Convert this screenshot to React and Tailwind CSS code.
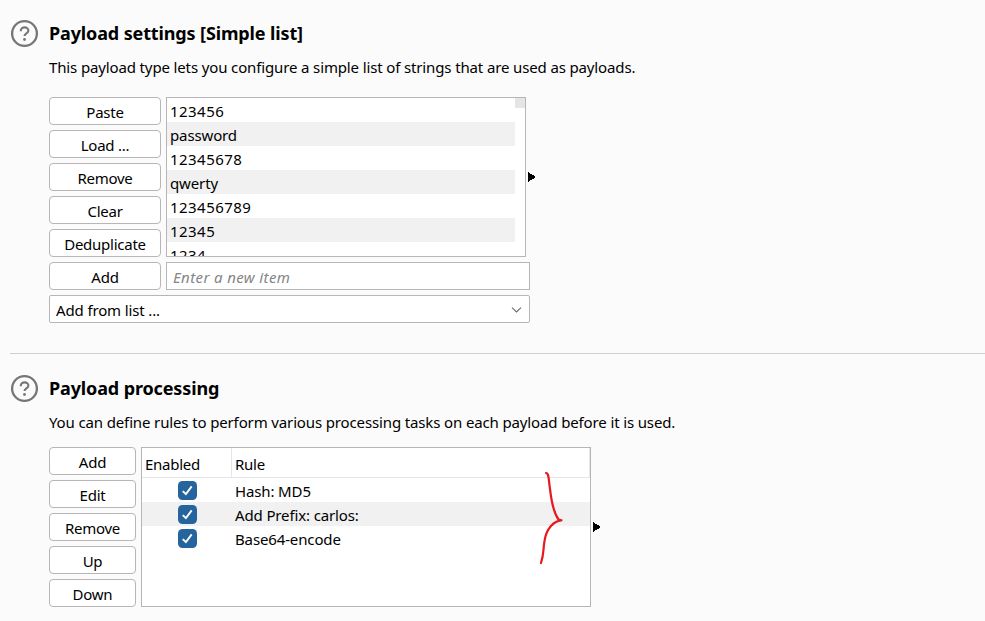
import React from 'react';

const PASSWORDS = ['123456', 'password', '12345678', 'qwerty', '123456789', '12345', '1234'];

const LIST_ACTIONS = ['Paste', 'Load ...', 'Remove', 'Clear', 'Deduplicate', 'Add'];
const RULE_ACTIONS = ['Add', 'Edit', 'Remove', 'Up', 'Down'];

const RULES = ['Hash: MD5', 'Add Prefix: carlos:', 'Base64-encode'];

function HelpIcon() {
  return (
    <svg className="mr-[10px] h-[29px] w-[29px] shrink-0" viewBox="0 0 29 29" fill="none">
      <circle cx="14.5" cy="14.5" r="12.4" stroke="#767676" strokeWidth="2.3" />
      <path d="M10.8 12.2v-0.6a3.8 3.2 0 0 1 7.6 0c0 2.8-3.9 2.7-3.9 5.5" stroke="#767676" strokeWidth="2.1" />
      <circle cx="14.5" cy="20.5" r="1.4" fill="#767676" />
    </svg>
  );
}

function Heading({ children }) {
  return (
    <div className="flex h-[29px] items-center">
      <HelpIcon />
      <h2 className="text-[18px] leading-[29px] font-bold tracking-[-0.13px] whitespace-nowrap">{children}</h2>
    </div>
  );
}

function Button({ children }) {
  return (
    <button className="h-7 w-full shrink-0 rounded-[4px] border border-[#b9b5b6] bg-white pt-[2px] text-center leading-[24px] tracking-[-0.25px] whitespace-nowrap">
      {children}
    </button>
  );
}

function Arrow() {
  return (
    <svg className="h-[11px] w-2 shrink-0" viewBox="0 0 8 11" shapeRendering="crispEdges">
      <path d="M0 0L8 5L0 10Z" fill="#000" />
    </svg>
  );
}

function Checkbox() {
  return (
    <svg className="h-[19px] w-[19px]" viewBox="0 0 19 19" fill="none">
      <rect width="19" height="19" rx="4.5" fill="#26649e" />
      <path d="M4.7 10.1L7.9 13L13.7 5.4" stroke="#fff" strokeWidth="1.9" />
    </svg>
  );
}

export default function App() {
  return (
    <div className="h-[621px] w-[985px] overflow-hidden bg-[#fbfbfb] pt-[19px] pl-[10px] font-['Noto_Sans','Open_Sans',sans-serif] text-[15px] tracking-[-0.135px] text-black">
      <section className="h-[334px]">
        <Heading>Payload settings [Simple list]</Heading>
        <div className="pl-[39px]">
          <p className="mt-[7px] h-[24px] leading-[24px] whitespace-nowrap">
            This payload type lets you configure a simple list of strings that are used as payloads.
          </p>
          <div className="mt-[18px] flex">
            <div className="flex w-[112px] flex-col gap-[5px]">
              {LIST_ACTIONS.map((label) => (
                <Button key={label}>{label}</Button>
              ))}
            </div>
            <div className="ml-[5px] flex w-[370px] flex-col gap-[5px]">
              <div className="flex h-[160px] items-center gap-[2px]">
                <div className="flex h-[160px] w-[360px] overflow-hidden border border-[#b9b5b6] bg-white">
                  <div className="w-[348px]">
                    {PASSWORDS.map((p) => (
                      <div
                        key={p}
                        className={
                          'h-6 pt-px pl-[3px] leading-[24px] even:bg-[#f1f1f1] ' +
                          (/^\d/.test(p) ? 'tracking-[0.46px]' : 'tracking-[-0.13px]')
                        }
                      >
                        {p}
                      </div>
                    ))}
                  </div>
                  <div className="h-[10px] w-[10px] bg-[#e5e5e5]" />
                </div>
                <Arrow />
              </div>
              <div className="h-7 w-[364px] border border-[#b9b5b6] bg-white pt-[2px] pl-[6px] leading-[24px] tracking-[0.38px] text-[#858585] italic">
                Enter a new item
              </div>
            </div>
          </div>
          <div className="mt-[5px] flex h-7 w-[481px] items-center justify-between rounded-[2px] border border-[#b9b5b6] bg-white pr-[7px] pl-[6px]">
            <span className="pt-[2px] leading-[24px]">Add from list ...</span>
            <svg className="mt-px h-[6px] w-[11px]" viewBox="0 0 11 6" fill="none">
              <path d="M1 0.7L5.5 5L10 0.7" stroke="#6b6b6b" strokeWidth="1.1" />
            </svg>
          </div>
        </div>
      </section>
      <section className="border-t border-[#cfcfcf] pt-[20px]">
        <Heading>Payload processing</Heading>
        <div className="pl-[39px]">
          <p className="mt-[7px] h-[24px] leading-[24px] whitespace-nowrap">
            You can define rules to perform various processing tasks on each payload before it is used.
          </p>
          <div className="mt-[13px] flex items-center">
            <div className="flex w-[87px] flex-col gap-[5px]">
              {RULE_ACTIONS.map((label) => (
                <Button key={label}>{label}</Button>
              ))}
            </div>
            <div className="relative mr-[2px] ml-[5px] h-[160px] w-[450px] border border-[#b9b5b6] bg-white">
              <div className="flex h-[30px] border-b border-[#e6e6e6] leading-[24px] tracking-[-0.25px]">
                <div className="w-[90px] border-r border-[#e6e6e6] pt-[4px] pl-[3px]">Enabled</div>
                <div className="flex-1 border-r border-[#e6e6e6] pt-[4px] pl-[3px]">Rule</div>
              </div>
              {RULES.map((r) => (
                <div key={r} className="flex h-6 items-center odd:bg-[#f1f1f1]">
                  <div className="flex w-[90px] justify-center pt-px pl-px">
                    <Checkbox />
                  </div>
                  <div className="pt-[2px] pl-[3px] leading-[24px]">{r}</div>
                </div>
              ))}
              <svg className="absolute top-[20px] left-[392px] h-[100px] w-[36px]" viewBox="534 468 36 100" fill="none">
                <path
                  d="M546 473C549 473 548.5 479 550 489C551.5 502 554.5 514 558.5 519.5L561.5 520.3C554 520.5 546 529 544.5 541C543 550 544 554 541 563"
                  stroke="#e6191e"
                  strokeWidth="2.2"
                  strokeLinecap="round"
                  strokeLinejoin="round"
                />
              </svg>
            </div>
            <Arrow />
          </div>
        </div>
      </section>
    </div>
  );
}
